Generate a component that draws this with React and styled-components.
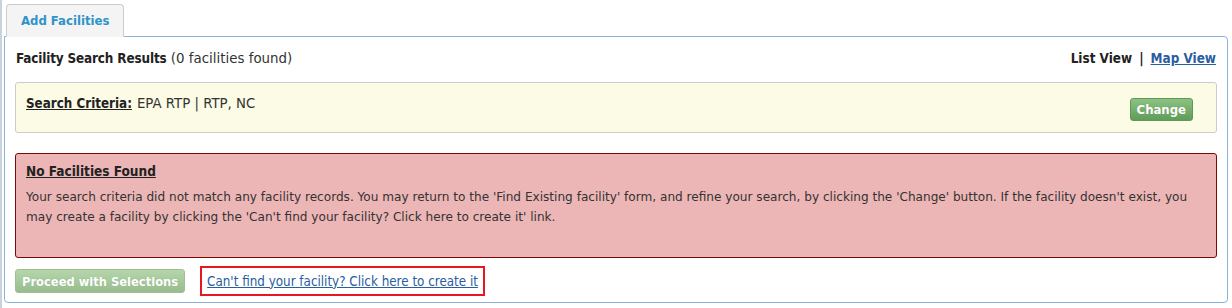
import React from 'react';
import styled, { createGlobalStyle } from 'styled-components';

const GlobalStyle = createGlobalStyle`
  body {
    margin: 0;
    background: #ffffff;
    font-family: 'DejaVu Sans', sans-serif;
    font-size: 12px;
    color: #333333;
  }
`

const Page = styled.div`
  width: 1232px;
  height: 308px;
  box-sizing: border-box;
  border-left: 2px solid #c9d3e0;
  padding: 4px 4px 0 2px;
`

const TabBar = styled.div`
  display: flex;
  padding-left: 2px;
  margin-bottom: -1px;
  position: relative;
  z-index: 1;
`

const Tab = styled.div`
  height: 33px;
  box-sizing: border-box;
  padding: 0 14px;
  display: flex;
  align-items: center;
  background: #f4f4f4;
  border: 1px solid #cccccc;
  border-bottom: 1px solid #f4f4f4;
  border-radius: 4px 4px 0 0;
  color: #2e93c9;
  font-family: 'DejaVu Sans Condensed', 'DejaVu Sans', sans-serif;
  font-weight: bold;
  font-size: 13px;
`

const Panel = styled.div`
  height: 267px;
  box-sizing: border-box;
  border: 1px solid #8eb1d8;
  border-radius: 0 4px 4px 4px;
  padding: 10px 10px 0 10px;
`

const HeaderRow = styled.div`
  display: flex;
  justify-content: space-between;
  align-items: center;
  height: 22px;
  padding-left: 1px;
  margin-bottom: 13px;
  font-size: 13.4px;
`

const Strong = styled.span`
  font-family: 'DejaVu Sans Condensed', 'DejaVu Sans', sans-serif;
  font-weight: bold;
  color: #222222;
  letter-spacing: ${props => props.$tight ? '-0.15px' : '0'};
  text-decoration: ${props => props.$under ? 'underline' : 'none'};
`

const Views = styled.div`
  display: flex;
  gap: 7px;
  align-items: center;
  padding-right: 1px;
`

const ViewLink = styled(Strong)`
  color: #2a5d9f;
  text-decoration: underline;
  cursor: pointer;
`

const Box = styled.div`
  border: 1px solid ${props => props.$border};
  background: ${props => props.$bg};
  border-radius: 3px;
  box-sizing: border-box;
`

const CriteriaBox = styled(Box)`
  height: 51px;
  display: flex;
  align-items: flex-start;
  justify-content: space-between;
  padding: 11px 23px 0 10px;
  margin-bottom: 20px;
`

const Criteria = styled.div`
  font-size: 13.3px;
  line-height: 20px;
  color: #333333;
  display: flex;
  gap: 5px;
`

const GreenButton = styled.button`
  font-family: 'DejaVu Sans Condensed', 'DejaVu Sans', sans-serif;
  font-size: ${props => props.$size};
  font-weight: bold;
  color: #ffffff;
  border: 1px solid ${props => props.$faded ? '#9fbf93' : '#5e9a57'};
  border-radius: 3px;
  background: ${props => props.$faded
    ? 'linear-gradient(#b5d6ab, #98bc8d)'
    : 'linear-gradient(#8cc283, #5f9d58)'};
  height: ${props => props.$height};
  margin-top: ${props => props.$top || '0'};
  padding: 0 ${props => props.$pad};
  cursor: pointer;
  text-shadow: 0 0 1px rgba(0, 0, 0, 0.15);
`

const AlertBox = styled(Box)`
  height: 105px;
  padding: 9px 10px 0 10px;
  margin-bottom: 8px;
`

const AlertTitle = styled.div`
  font-size: 13.5px;
  line-height: 16px;
  margin-bottom: 8px;
`

const AlertText = styled.p`
  margin: 0;
  font-size: 12.1px;
  line-height: 20px;
  color: #333333;
`

const Footer = styled.div`
  display: flex;
  align-items: center;
  gap: 15px;
`

const LinkFrame = styled.div`
  border: 2px solid #e8161f;
  height: 30px;
  box-sizing: border-box;
  display: flex;
  align-items: center;
  padding: 0 5px;
`

const CreateLink = styled.a`
  font-family: 'DejaVu Sans Condensed', 'DejaVu Sans', sans-serif;
  color: #2a5d9f;
  text-decoration: underline;
  font-size: 13.3px;
  cursor: pointer;
`

export default function App() {
  return (
    <>
      <GlobalStyle />
      <Page>
        <TabBar>
          <Tab>Add Facilities</Tab>
        </TabBar>
        <Panel>
          <HeaderRow>
            <div><Strong $tight>Facility Search Results</Strong> (0 facilities found)</div>
            <Views>
              <Strong>List View</Strong>
              <Strong>|</Strong>
              <ViewLink>Map View</ViewLink>
            </Views>
          </HeaderRow>
          <CriteriaBox $bg="#fcfbe6" $border="#cccccc">
            <Criteria><Strong $under>Search Criteria:</Strong><span>EPA RTP | RTP, NC</span></Criteria>
            <GreenButton $height="23px" $pad="6px" $size="13px" $top="4px">Change</GreenButton>
          </CriteriaBox>
          <AlertBox $bg="#edb6b6" $border="#7a0a0a">
            <AlertTitle><Strong $under>No Facilities Found</Strong></AlertTitle>
            <AlertText>
              Your search criteria did not match any facility records. You may return to the 'Find Existing facility' form, and refine your search, by clicking the 'Change' button. If the facility doesn't exist, you may create a facility by clicking the 'Can't find your facility? Click here to create it' link.
            </AlertText>
          </AlertBox>
          <Footer>
            <GreenButton $faded $height="24px" $pad="6px" $size="12.8px">Proceed with Selections</GreenButton>
            <LinkFrame>
              <CreateLink>Can't find your facility? Click here to create it</CreateLink>
            </LinkFrame>
          </Footer>
        </Panel>
      </Page>
    </>
  );
}
